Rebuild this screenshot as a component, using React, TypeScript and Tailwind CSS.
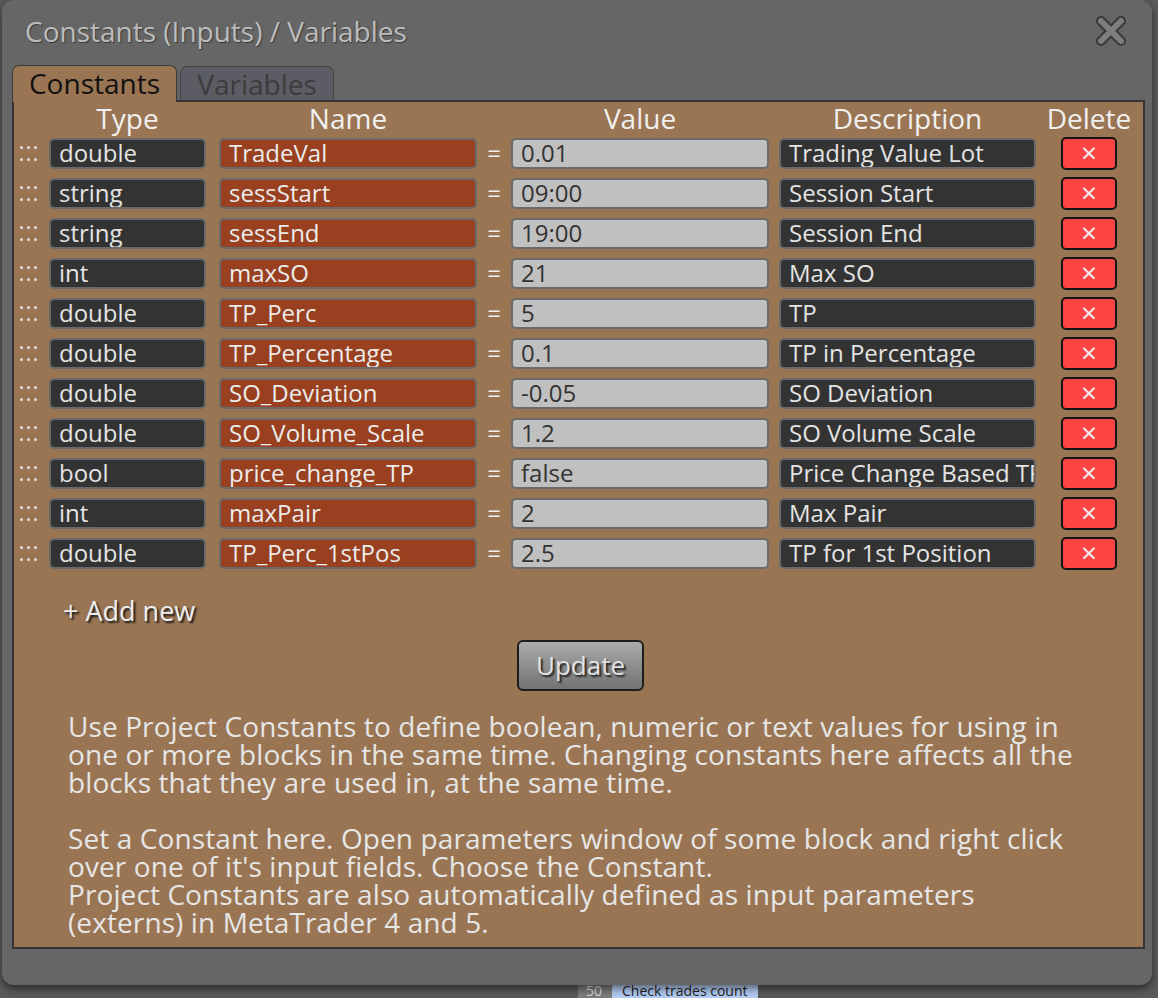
import React from "react";

type Constant = {
  type: string;
  name: string;
  value: string;
  description: string;
};

const constants: Constant[] = [
  { type: "double", name: "TradeVal", value: "0.01", description: "Trading Value Lot" },
  { type: "string", name: "sessStart", value: "09:00", description: "Session Start" },
  { type: "string", name: "sessEnd", value: "19:00", description: "Session End" },
  { type: "int", name: "maxSO", value: "21", description: "Max SO" },
  { type: "double", name: "TP_Perc", value: "5", description: "TP" },
  { type: "double", name: "TP_Percentage", value: "0.1", description: "TP in Percentage" },
  { type: "double", name: "SO_Deviation", value: "-0.05", description: "SO Deviation" },
  { type: "double", name: "SO_Volume_Scale", value: "1.2", description: "SO Volume Scale" },
  { type: "bool", name: "price_change_TP", value: "false", description: "Price Change Based TP" },
  { type: "int", name: "maxPair", value: "2", description: "Max Pair" },
  { type: "double", name: "TP_Perc_1stPos", value: "2.5", description: "TP for 1st Position" },
];

const font = { fontFamily: '"Open Sans", "Noto Sans", sans-serif' };

function DragHandle() {
  return (
    <div className="w-[35px] flex justify-start pl-[6px]">
      <div className="grid grid-cols-3 gap-x-[4px] gap-y-[9px]">
        {Array.from({ length: 6 }).map((_, i) => (
          <span key={i} className="block w-[3px] h-[3px] rounded-full bg-[#e2e2e2]" />
        ))}
      </div>
    </div>
  );
}

function Field({ text, className }: { text: string; className: string }) {
  return (
    <div
      className={`h-[31px] rounded-[5px] border-2 border-[#6a6a6a] px-[8px] flex items-center text-[24px] leading-none whitespace-nowrap overflow-hidden ${className}`}
    >
      {text}
    </div>
  );
}

function CloseIcon() {
  return (
    <svg width="34" height="30" viewBox="0 0 34 30">
      <g strokeLinecap="round">
        <path d="M7 5 L27 25 M27 5 L7 25" stroke="#3a3a3a" strokeWidth="10" />
        <path d="M7 5 L27 25 M27 5 L7 25" stroke="#7e7e7e" strokeWidth="6" />
      </g>
    </svg>
  );
}

function ConstantRow({ c }: { c: Constant }) {
  return (
    <div className="flex items-center h-[40px]">
      <DragHandle />
      <Field text={c.type} className="w-[157px] bg-[#333333] text-[#e4e4e4]" />
      <div className="w-[13px]" />
      <Field text={c.name} className="w-[258px] bg-[#98401f] text-[#ececec]" />
      <div className="w-[34px] text-center text-[24px] text-[#eeeeee] leading-none">=</div>
      <Field text={c.value} className="w-[258px] bg-[#c0c0c0] text-[#333333]" />
      <div className="w-[10px]" />
      <Field text={c.description} className="w-[257px] bg-[#333333] text-[#e4e4e4]" />
      <div className="w-[25px]" />
      <button className="w-[56px] h-[33px] rounded-[5px] border-2 border-[#151515] bg-[#ff4444] text-[#eeeeee] text-[28px] leading-none flex items-center justify-center pb-[3px]">
        ×
      </button>
    </div>
  );
}

export default function App() {
  return (
    <div
      className="relative w-[1158px] h-[998px] overflow-hidden bg-[#5a5a5a]"
      style={font}
    >
      {/* canvas node peeking out below the dialog */}
      <div className="absolute left-[578px] top-[983px] flex items-center h-[15px] rounded-t-[4px] bg-[#7d7d7d] pl-[8px] text-[14px] leading-none text-[#dcdcdc]">
        50
        <span className="ml-[10px] px-[10px] rounded-t-[4px] bg-[#b4cdf5] text-[#222]">Check trades count</span>
      </div>

      <div className="relative ml-[2px] w-[1150px] h-[985px] rounded-[12px] bg-[#666666] shadow-[0_4px_8px_rgba(0,0,0,0.5)] flex flex-col">
        {/* title bar */}
        <div className="h-[64px] flex items-start justify-between pl-[23px] pr-[24px]">
          <div className="mt-[10px] text-[28px] text-[#bdbdbd] [text-shadow:1px_1px_1px_#3a3a3a]">
            Constants (Inputs) / Variables
          </div>
          <div className="mt-[16px]">
            <CloseIcon />
          </div>
        </div>

        {/* tabs */}
        <div className="flex items-end pl-[10px] h-[36px]">
          <div className="w-[165px] h-[37px] rounded-t-[7px] border-t border-x border-[#3a3a3a] bg-[#997553] text-[28px] text-[#111] flex items-center justify-center leading-none relative z-10 -mb-[2px] pb-[2px]">
            Constants
          </div>
          <div className="ml-[3px] w-[154px] h-[34px] rounded-t-[7px] border-t border-x border-[#444] bg-[#5b5c64] text-[28px] text-[#3c3c3c] flex items-center justify-center leading-none">
            Variables
          </div>
        </div>

        {/* panel */}
        <div className="ml-[10px] w-[1133px] h-[849px] border-2 border-[#353535] bg-[#997553] flex flex-col">
          {/* column headings */}
          <div className="flex items-center h-[31px] text-[28px] text-[#f0f0f0] leading-none">
            <div className="w-[35px]" />
            <div className="w-[157px] text-center">Type</div>
            <div className="w-[13px]" />
            <div className="w-[258px] text-center">Name</div>
            <div className="w-[34px]" />
            <div className="w-[258px] text-center">Value</div>
            <div className="w-[10px]" />
            <div className="w-[257px] text-center">Description</div>
            <div className="w-[25px]" />
            <div className="w-[56px] flex justify-center whitespace-nowrap">Delete</div>
          </div>

          <div className="flex flex-col">
            {constants.map((c) => (
              <ConstantRow key={c.name} c={c} />
            ))}
          </div>

          <div className="mt-[24px] pl-[49px] text-[27px] text-[#eeeeee] leading-none [text-shadow:2px_2px_2px_#1a1a1a]">
            + Add new
          </div>

          <div className="mt-[16px] flex justify-center">
            <button className="ml-[4px] w-[127px] h-[51px] rounded-[6px] border-2 border-[#1d1d1d] bg-gradient-to-b from-[#ababab] to-[#737373] text-[26px] text-[#e2e2e2] [text-shadow:2px_2px_2px_#1a1a1a]">
              Update
            </button>
          </div>

          <div className="mt-[21px] pl-[54px] pr-[20px] text-[28px] tracking-[0.1px] leading-[28px] text-[#e6e6e6] whitespace-nowrap">
            <p>
              Use Project Constants to define boolean, numeric or text values for using in
              <br />
              one or more blocks in the same time. Changing constants here affects all the
              <br />
              blocks that they are used in, at the same time.
            </p>
            <p className="mt-[28px]">
              Set a Constant here. Open parameters window of some block and right click
              <br />
              over one of it's input fields. Choose the Constant.
              <br />
              Project Constants are also automatically defined as input parameters
              <br />
              (externs) in MetaTrader 4 and 5.
            </p>
          </div>
        </div>
      </div>
    </div>
  );
}
